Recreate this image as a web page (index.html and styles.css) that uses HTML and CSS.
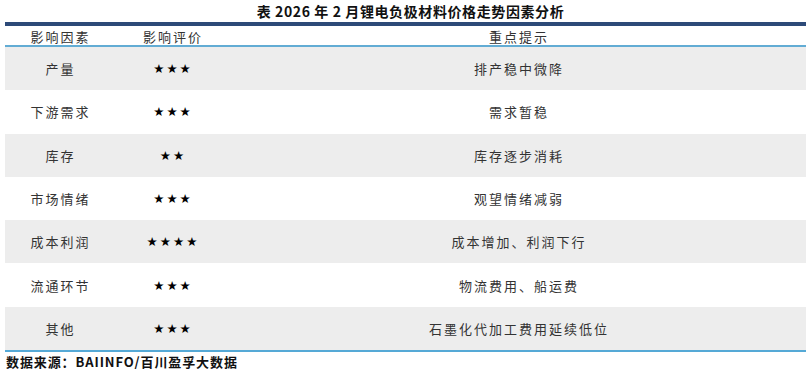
FILE: index.html
```html
<!DOCTYPE html>
<html lang="zh">
<head>
<meta charset="utf-8">
<link rel="stylesheet" href="styles.css">
</head>
<body>
<div class="page">
  <div class="title">表 2026 年 2 月锂电负极材料价格走势因素分析</div>
  <div class="table">
    <div class="row head">
      <div class="c1">影响因素</div><div class="c2">影响评价</div><div class="c3">重点提示</div>
    </div>
    <div class="row alt"><div class="c1">产量</div><div class="c2 stars">★★★</div><div class="c3">排产稳中微降</div></div>
    <div class="row"><div class="c1">下游需求</div><div class="c2 stars">★★★</div><div class="c3">需求暂稳</div></div>
    <div class="row alt"><div class="c1">库存</div><div class="c2 stars">★★</div><div class="c3">库存逐步消耗</div></div>
    <div class="row"><div class="c1">市场情绪</div><div class="c2 stars">★★★</div><div class="c3">观望情绪减弱</div></div>
    <div class="row alt"><div class="c1">成本利润</div><div class="c2 stars">★★★★</div><div class="c3">成本增加、利润下行</div></div>
    <div class="row"><div class="c1">流通环节</div><div class="c2 stars">★★★</div><div class="c3">物流费用、船运费</div></div>
    <div class="row alt"><div class="c1">其他</div><div class="c2 stars">★★★</div><div class="c3">石墨化代加工费用延续低位</div></div>
  </div>
  <div class="source">数据来源：BAIINFO/百川盈孚大数据</div>
</div>
</body>
</html>
```
FILE: styles.css
```css
* { box-sizing: border-box; }
html, body { margin: 0; padding: 0; background: #fff; }
body {
  font-family: "Noto Sans CJK SC", "Liberation Serif", serif;
  color: #222;
  width: 806px;
  height: 379px;
  overflow: hidden;
}
.page { padding: 0 0 0 5px; }
.title {
  height: 22px;
  text-align: center;
  font-weight: bold;
  font-size: 14px;
  line-height: 22px;
  color: #111;
  padding-left: 10px;
  letter-spacing: 0.6px;
}
.table {
  border-top: 4px solid #2d4a78;
  border-bottom: 2px solid #55a9d6;
}
.row {
  display: grid;
  grid-template-columns: 109px 118px 1fr;
  height: 43.3px;
  align-items: center;
  font-size: 13px;
  letter-spacing: 2px;
  color: #333;
}
.row.head {
  height: 21px;
  border-bottom: 2px solid #62acd4;
  font-size: 13px;
  padding-top: 1px;
}
.row.alt { background: #ededed; }
.c1, .c2, .c3 { text-align: center; }
.c1 { padding-left: 2px; }
.stars {
  font-family: "DejaVu Sans", sans-serif;
  font-size: 12.5px;
  letter-spacing: 2px;
  color: #000;
}
.source {
  font-weight: bold;
  font-size: 13px;
  line-height: 20px;
  color: #111;
  padding-left: 1px;
  letter-spacing: 0.9px;
}
```
